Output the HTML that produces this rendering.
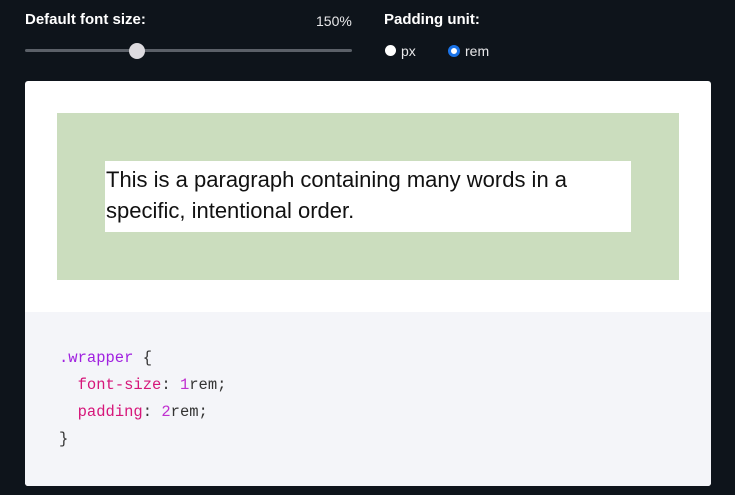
<!DOCTYPE html>
<html><head><style>
body{margin:0;width:735px;height:495px;background:#0e141b;font-family:"Liberation Sans",sans-serif;position:relative;overflow:hidden}
.lbl{position:absolute;color:#fff;font-size:15px;font-weight:bold;top:11px}
.pct{position:absolute;color:#e8e8ea;font-size:14px;top:13px;left:316px}
.track{position:absolute;left:25px;top:49px;width:327px;height:3px;background:#5b6068;border-radius:2px}
.thumb{position:absolute;left:129px;top:43px;width:16px;height:16px;border-radius:50%;background:#dcdadf}
.r{position:absolute;top:45px;width:11px;height:11px;border-radius:50%;background:#fff}
.rt{position:absolute;top:43px;color:#e8e8ea;font-size:14px}
.card{position:absolute;left:25px;top:81px;width:686px;height:405px;background:#fff;border-radius:3px;overflow:hidden}
.green{position:absolute;left:32px;top:32px;width:622px;height:167px;background:#cbddbe}
.p{position:absolute;left:48px;top:48px;width:526px;height:71px;background:#fff;font-size:22px;line-height:31px;color:#111;padding:3px 0 0 1px;box-sizing:border-box}
.code{position:absolute;left:0;top:231px;width:686px;height:174px;background:#f4f5f9;font-family:"Liberation Mono",monospace;font-size:15.5px;line-height:27px;color:#333;padding:33px 0 0 34px;box-sizing:border-box;white-space:pre}
.s{color:#a020e0}.k{color:#d6167a}.n{color:#c030d0}
</style></head><body>
<div class="lbl" style="left:25px">Default font size:</div>
<div class="pct">150%</div>
<div class="lbl" style="left:384px">Padding unit:</div>
<div class="track"></div><div class="thumb"></div>
<div class="r" style="left:385px"></div><div class="rt" style="left:401px">px</div>
<div class="r" style="left:448px;background:#fff;border:3px solid #1a73e8;width:6px;height:6px"></div><div class="rt" style="left:465px">rem</div>
<div class="card">
<div class="green"><div class="p">This is a paragraph containing many words in a specific, intentional order.</div></div>
<div class="code"><span class="s">.wrapper</span> {
  <span class="k">font-size</span>: <span class="n">1</span>rem;
  <span class="k">padding</span>: <span class="n">2</span>rem;
}</div>
</div>
</body></html>
